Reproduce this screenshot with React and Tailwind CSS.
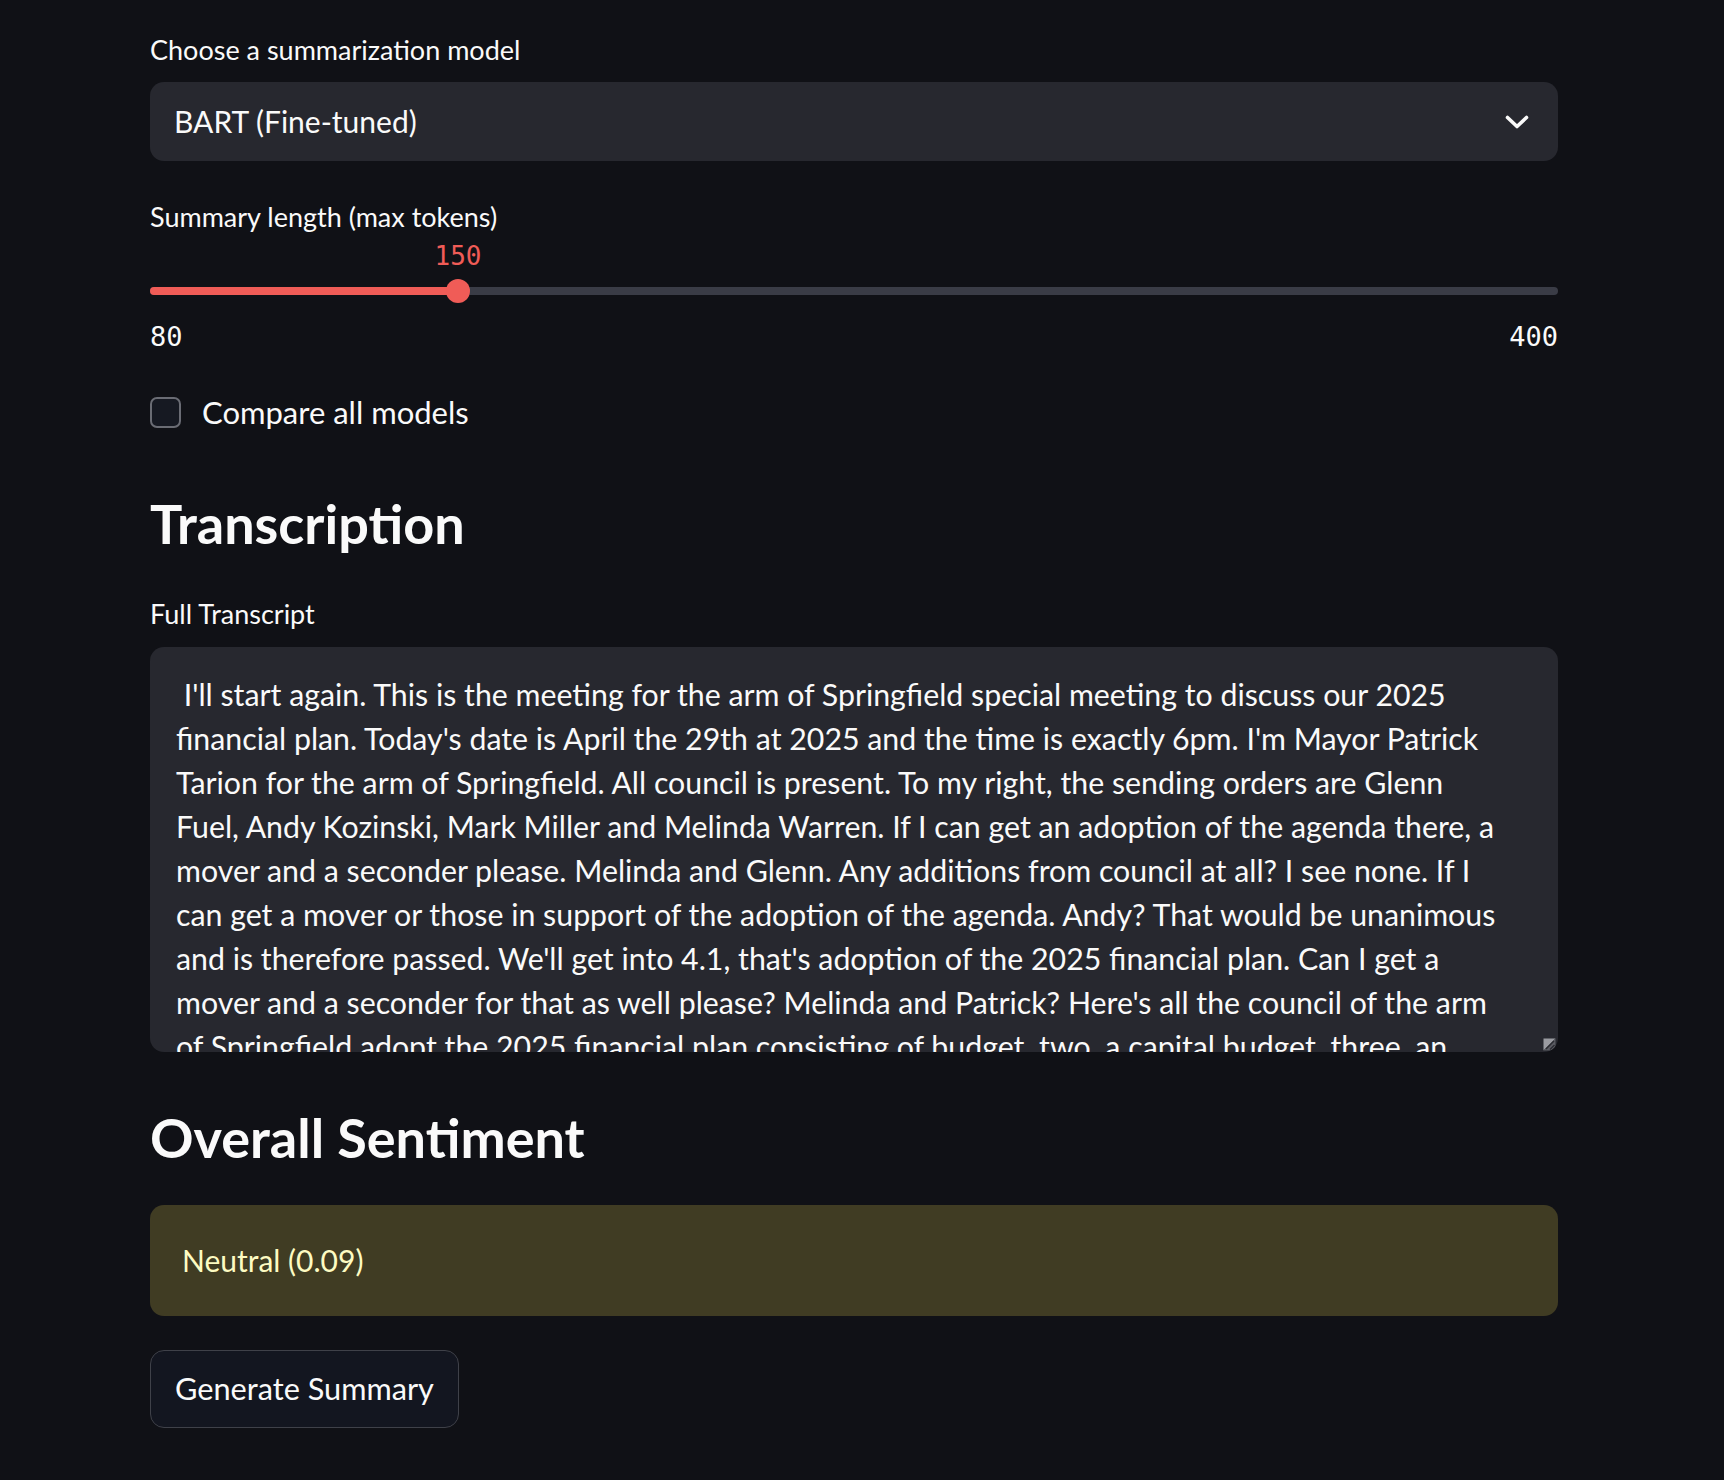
const transcript = [
  " I'll start again. This is the meeting for the arm of Springfield special meeting to discuss our 2025",
  "financial plan. Today's date is April the 29th at 2025 and the time is exactly 6pm. I'm Mayor Patrick",
  "Tarion for the arm of Springfield. All council is present. To my right, the sending orders are Glenn",
  "Fuel, Andy Kozinski, Mark Miller and Melinda Warren. If I can get an adoption of the agenda there, a",
  "mover and a seconder please. Melinda and Glenn. Any additions from council at all? I see none. If I",
  "can get a mover or those in support of the adoption of the agenda. Andy? That would be unanimous",
  "and is therefore passed. We'll get into 4.1, that's adoption of the 2025 financial plan. Can I get a",
  "mover and a seconder for that as well please? Melinda and Patrick? Here's all the council of the arm",
  "of Springfield adopt the 2025 financial plan consisting of budget, two, a capital budget, three, an",
];

const sans = "font-['Lato','Liberation_Sans',sans-serif]";
const mono = "font-['DejaVu_Sans_Mono','Liberation_Mono',monospace]";

function Label({ children }) {
  return <div className="text-[27px] leading-[36px] text-[#fafafa]">{children}</div>;
}

function Slider({ min, max, value }) {
  const pct = ((value - min) / (max - min)) * 100;
  return (
    <div>
      <div className="relative h-[42px]">
        <span
          className={`absolute top-0 -translate-x-1/2 text-[26px] leading-[42px] text-[#f05c57] ${mono}`}
          style={{ left: `${pct}%` }}
        >
          {value}
        </span>
      </div>
      <div className="relative mt-[2px] flex h-[24px] items-center">
        <div className="h-[8px] w-full rounded-full bg-[#3a3c46]">
          <div className="h-full rounded-full bg-[#f05c57]" style={{ width: `${pct}%` }} />
        </div>
        <div
          className="absolute top-0 h-[24px] w-[24px] -translate-x-1/2 rounded-full bg-[#f05c57]"
          style={{ left: `${pct}%` }}
        />
      </div>
      <div className={`mt-[19px] flex justify-between text-[27px] leading-[30px] text-[#fafafa] ${mono}`}>
        <span>{min}</span>
        <span>{max}</span>
      </div>
    </div>
  );
}

export default function App() {
  return (
    <div className={`min-h-[1480px] w-full bg-[#101116] pt-[32px] ${sans}`}>
      <div className="ml-[150px] w-[1408px]">
        <Label>Choose a summarization model</Label>
        <div className="mt-[14px] flex h-[79px] items-center justify-between rounded-[14px] bg-[#27282f] pl-[24px] pr-[29px]">
          <span className="text-[30px] text-[#fafafa]">BART (Fine-tuned)</span>
          <svg width="24" height="14" viewBox="0 0 24 14" fill="none">
            <path d="M2.5 2.5 12 11.5 21.5 2.5" stroke="#fafafa" strokeWidth="3.6" strokeLinecap="round" strokeLinejoin="round" />
          </svg>
        </div>

        <div className="mt-[38px]">
          <Label>Summary length (max tokens)</Label>
        </div>
        <Slider min={80} max={400} value={150} />

        <div className="mt-[45px] flex h-[31px] items-center gap-[21px]">
          <div className="h-[31px] w-[31px] rounded-[7px] border-2 border-[#6a6c74] bg-[#161922]" />
          <span className="text-[31px] text-[#fafafa]">Compare all models</span>
        </div>

        <h2 className="mt-[60px] text-[54px] font-bold leading-[72px] text-[#fafafa]">Transcription</h2>

        <div className="mt-[36px]">
          <Label>Full Transcript</Label>
        </div>
        <div className="relative mt-[15px] h-[405px] overflow-hidden rounded-[14px] bg-[#27282f] px-[26px] pt-[25px]">
          {transcript.map((line, i) => (
            <div key={i} className="whitespace-pre text-[30.3px] leading-[44px] text-[#fafafa]">
              {line}
            </div>
          ))}
          <svg className="absolute bottom-[1px] right-[2px]" width="13" height="13" viewBox="0 0 13 13">
            <path d="M0.5 12.5V0.5H12.5Z" fill="#9a9ba1" />
            <path d="M12.5 0.5V12.5H0.5Z" fill="#5b5c63" />
            <path d="M3 11 11 3M7 11.5 11.5 7" stroke="#2a2b31" strokeWidth="1.4" />
          </svg>
        </div>

        <h2 className="mt-[50px] text-[54px] font-bold leading-[72px] text-[#fafafa]">Overall Sentiment</h2>

        <div className="mt-[31px] flex h-[111px] items-center rounded-[14px] bg-[#403c23] px-[32px]">
          <span className="text-[30px] text-[#fdfbc2]">Neutral (0.09)</span>
        </div>

        <button className="mt-[34px] flex h-[78px] items-center rounded-[14px] border border-[#3f4149] bg-[#131620] px-[24px] text-[30.7px] text-[#fafafa]">
          Generate Summary
        </button>
      </div>
    </div>
  );
}
